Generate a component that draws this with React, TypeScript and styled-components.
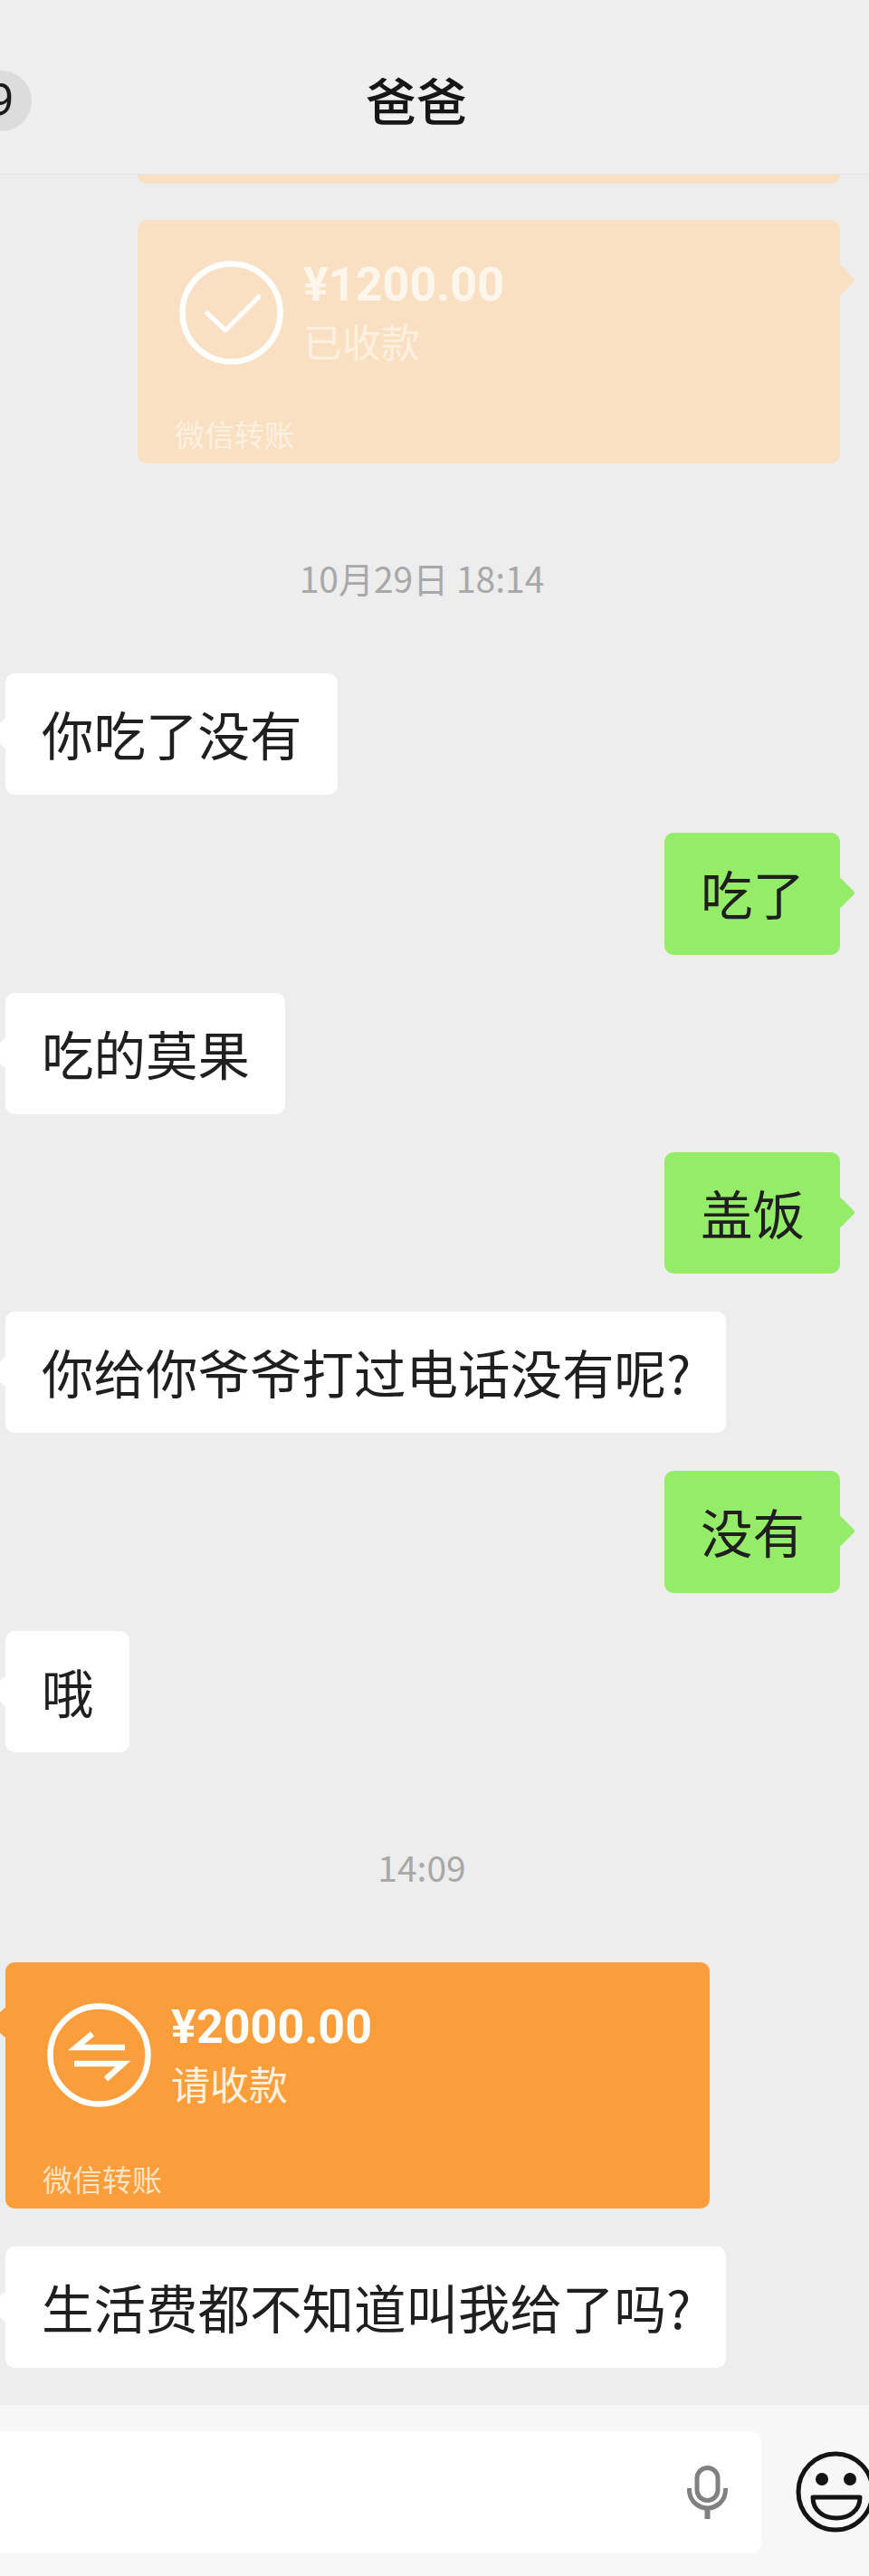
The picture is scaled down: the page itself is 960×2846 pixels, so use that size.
import React from 'react'
import styled, { createGlobalStyle } from 'styled-components'

const GlobalStyle = createGlobalStyle`
  html, body {
    margin: 0;
    padding: 0;
    background: #ededed;
  }
  body {
    font-family: "Noto Sans CJK SC", "Noto Sans", sans-serif;
  }
`

const Page = styled.div`
  width: 960px;
  height: 2846px;
  display: flex;
  flex-direction: column;
  overflow: hidden;
  background: #ededed;
`

const Header = styled.header`
  flex-shrink: 0;
  height: 193px;
  display: flex;
  align-items: center;
  box-sizing: border-box;
  background: #efefef;
  border-bottom: 1px solid #e3e3e3;
`

const Badge = styled.div`
  flex-shrink: 0;
  width: 67px;
  height: 67px;
  margin: 31px 0 0 -32px;
  border-radius: 50%;
  background: #dcdcdc;
  color: #1a1a1a;
  font-family: Roboto, sans-serif;
  font-size: 50px;
  line-height: 67px;
  text-align: center;
`

const Title = styled.h1`
  margin: 26px 0 0 369px;
  color: #161616;
  font-size: 56px;
  font-weight: 500;
  line-height: 70px;
`

const Messages = styled.main`
  flex: 1;
  display: flex;
  flex-direction: column;
  gap: 42px;
`

const Row = styled.div<{ $mine?: boolean }>`
  display: flex;
  justify-content: ${p => (p.$mine ? 'flex-end' : 'flex-start')};
  padding: ${p => (p.$mine ? '0 32px 0 0' : '0 0 0 6px')};
`

const ClippedCard = styled.div`
  height: 10px;
  margin: 0 32px -2px 152px;
  border-radius: 0 0 10px 10px;
  background: #fae0c2;
`

const Tail = styled.div<{ $mine?: boolean; $color: string }>`
  position: relative;
  background: ${p => p.$color};

  &::after {
    content: '';
    position: absolute;
    top: 54px;
    ${p => (p.$mine ? 'right: -12px;' : 'left: -12px;')}
    width: 25px;
    height: 25px;
    border-radius: 3px;
    background: ${p => p.$color};
    transform: rotate(45deg);
  }
`

const Bubble = styled(Tail)`
  height: 134.3px;
  padding: 0 39px 0 40px;
  border-radius: 10px;
  color: #1f1f1f;
  font-size: 57.5px;
  line-height: 132px;
  white-space: nowrap;
`

const TimeStamp = styled.div`
  margin: 57px 0 37px;
  padding-right: 28px;
  color: #a8a8a8;
  font-size: 39px;
  line-height: 54px;
  text-align: center;
`

const TransferCard = styled(Tail)<{ $wide?: boolean }>`
  width: ${p => (p.$wide ? '778px' : '776px')};
  height: ${p => (p.$wide ? '272px' : '269px')};
  display: flex;
  flex-direction: column;
  justify-content: space-between;
  padding: 45px 0 14px 46px;
  box-sizing: border-box;
  border-radius: 10px;
`

const TransferMain = styled.div`
  display: flex;
  gap: 22px;
`

const TransferText = styled.div`
  display: flex;
  flex-direction: column;
`

const Amount = styled.div<{ $color: string }>`
  color: ${p => p.$color};
  font-family: Roboto, sans-serif;
  font-size: 52px;
  font-weight: 700;
  line-height: 54px;
`

const Status = styled.div<{ $color: string }>`
  margin-top: 7px;
  color: ${p => p.$color};
  font-size: 43px;
  line-height: 54px;
`

const TransferFooter = styled.div<{ $color: string }>`
  margin-left: -5px;
  color: ${p => p.$color};
  font-size: 33px;
  line-height: 38px;
`

const Composer = styled.footer`
  flex-shrink: 0;
  height: 189px;
  display: flex;
  gap: 38px;
  padding-top: 29px;
  box-sizing: border-box;
  background: #f7f7f7;
`

const Input = styled.div`
  flex-shrink: 0;
  width: 841px;
  height: 135px;
  display: flex;
  align-items: center;
  justify-content: flex-end;
  padding-right: 37px;
  box-sizing: border-box;
  border-radius: 0 12px 12px 0;
  background: #fff;
`

const EmojiButton = styled.div`
  flex-shrink: 0;
  margin-top: 22px;
  line-height: 0;
`

const CheckIcon = () => (
  <svg width="115" height="115" viewBox="0 0 115 115" fill="none" stroke="#fff" strokeWidth="6.5" strokeLinecap="round" strokeLinejoin="round">
    <circle cx="57.5" cy="57.5" r="54" />
    <path d="M31 58 L51 77 L88 40" strokeWidth="5" />
  </svg>
)

const ExchangeIcon = () => (
  <svg width="115" height="115" viewBox="0 0 115 115" fill="none" stroke="#fff" strokeWidth="6.5" strokeLinejoin="miter">
    <circle cx="57.5" cy="57.5" r="54" />
    <path d="M86 49 H32 L50 34" />
    <path d="M30 67 H84 L65 84" />
  </svg>
)

const MicIcon = () => (
  <svg width="45" height="59" viewBox="0 0 45 59" fill="none" stroke="#808080" strokeWidth="5">
    <rect x="11" y="2.5" width="23" height="36" rx="11.5" />
    <path d="M2.5 25 V27 A20 20 0 0 0 42.5 27 V25" />
    <path d="M22.5 46 V59" strokeWidth="6" />
  </svg>
)

const SmileIcon = () => (
  <svg width="88" height="90" viewBox="0 0 88 90" fill="none" stroke="#141414" strokeWidth="5">
    <ellipse cx="44" cy="45" rx="41" ry="42" />
    <circle cx="29" cy="31" r="7" fill="#141414" stroke="none" />
    <circle cx="60" cy="31" r="7" fill="#141414" stroke="none" />
    <path d="M19 51 H71 C71 66 59 74 45 74 C31 74 19 66 19 51 Z" strokeLinejoin="round" />
  </svg>
)

const PALE = '#fae0c2'
const ORANGE = '#fa9e3b'
const GREEN = '#95ec69'

const Text = ({ mine, children }: { mine?: boolean; children: React.ReactNode }) => (
  <Row $mine={mine}>
    <Bubble $mine={mine} $color={mine ? GREEN : '#fff'}>
      {children}
    </Bubble>
  </Row>
)

export default function App() {
  return (
    <Page>
      <GlobalStyle />
      <Header>
        <Badge>9</Badge>
        <Title>爸爸</Title>
      </Header>
      <Messages>
        <ClippedCard />
        <Row $mine>
          <TransferCard $mine $color={PALE}>
            <TransferMain>
              <CheckIcon />
              <TransferText>
                <Amount $color="#fdf6ec">¥1200.00</Amount>
                <Status $color="#fcf0e0">已收款</Status>
              </TransferText>
            </TransferMain>
            <TransferFooter $color="#fcf0e0">微信转账</TransferFooter>
          </TransferCard>
        </Row>
        <TimeStamp>10月29日 18:14</TimeStamp>
        <Text>你吃了没有</Text>
        <Text mine>吃了</Text>
        <Text>吃的莫果</Text>
        <Text mine>盖饭</Text>
        <Text>你给你爷爷打过电话没有呢?</Text>
        <Text mine>没有</Text>
        <Text>哦</Text>
        <TimeStamp>14:09</TimeStamp>
        <Row>
          <TransferCard $wide $color={ORANGE}>
            <TransferMain>
              <ExchangeIcon />
              <TransferText>
                <Amount $color="#fff">¥2000.00</Amount>
                <Status $color="#fff1e0">请收款</Status>
              </TransferText>
            </TransferMain>
            <TransferFooter $color="#fde3c4">微信转账</TransferFooter>
          </TransferCard>
        </Row>
        <Text>生活费都不知道叫我给了吗?</Text>
      </Messages>
      <Composer>
        <Input>
          <MicIcon />
        </Input>
        <EmojiButton>
          <SmileIcon />
        </EmojiButton>
      </Composer>
    </Page>
  )
}
